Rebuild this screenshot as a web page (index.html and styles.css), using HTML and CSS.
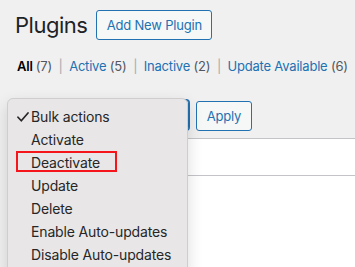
FILE: index.html
```html
<!DOCTYPE html>
<html lang="en">
<head>
    <meta charset="UTF-8">
    <meta name="viewport" content="width=device-width, initial-scale=1.0">
    <title>Plugins</title>
    <link rel="stylesheet" href="styles.css">
</head>
<body>
    <div class="wrap">
        <div class="page-header">
            <h1>Plugins</h1>
            <a href="#" class="btn">Add New Plugin</a>
        </div>

        <ul class="subsubsub">
            <li class="current">All <span class="count">(7)</span></li>
            <li class="sep">|</li>
            <li><a href="#">Active</a> <span class="count">(5)</span></li>
            <li class="sep">|</li>
            <li><a href="#">Inactive</a> <span class="count">(2)</span></li>
            <li class="sep">|</li>
            <li><a href="#">Update Available</a> <span class="count">(6)</span></li>
        </ul>

        <div class="tablenav">
            <div class="select"></div>
            <button class="btn btn-apply">Apply</button>
        </div>

        <div class="table">
            <div class="table-head"></div>
            <div class="table-body"></div>
        </div>

        <!-- open native select menu -->
        <div class="menu">
            <div class="menu-item selected">
                <span class="check">
                    <svg width="12" height="10" viewBox="0 0 12 10"><polyline points="1,5.2 4.3,8.8 11,1" fill="none" stroke="#262626" stroke-width="1.7" stroke-linecap="round" stroke-linejoin="round"/></svg>
                </span>
                Bulk actions
            </div>
            <div class="menu-item"><span class="check"></span>Activate</div>
            <div class="menu-item"><span class="check"></span>Deactivate</div>
            <div class="menu-item"><span class="check"></span>Update</div>
            <div class="menu-item"><span class="check"></span>Delete</div>
            <div class="menu-item"><span class="check"></span>Enable Auto-updates</div>
            <div class="menu-item"><span class="check"></span>Disable Auto-updates</div>
            <div class="highlight"></div>
        </div>
    </div>
</body>
</html>
```

FILE: styles.css
```css
body {
    margin: 0;
    background: #f0f0f1;
    font-family: Inter, 'Liberation Sans', sans-serif;
    color: #1d2327;
}
.wrap {
    position: relative;
    display: flex;
    flex-direction: column;
    height: 267px;
    overflow: hidden;
    padding-left: 15px;
}
.page-header {
    display: flex;
    align-items: center;
    gap: 9px;
    padding-top: 10px;
}
h1 {
    margin: 0;
    font-size: 22px;
    font-weight: 400;
    line-height: 30px;
    letter-spacing: -0.5px;
}
.btn {
    display: inline-flex;
    align-items: center;
    justify-content: center;
    box-sizing: border-box;
    height: 30px;
    padding: 0 10px;
    background: #f6f7f7;
    border: 1px solid #2271b1;
    border-radius: 3px;
    color: #2271b1;
    font-family: inherit;
    font-size: 13px;
    letter-spacing: -0.2px;
    white-space: nowrap;
    text-decoration: none;
    cursor: pointer;
}
.page-header .btn {
    width: 116px;
}
.subsubsub {
    display: flex;
    gap: 6.5px;
    list-style: none;
    margin: 16px 0 0 2px;
    padding: 0;
    font-size: 13px;
    line-height: 20px;
    letter-spacing: -0.2px;
    color: #50575e;
    white-space: nowrap;
}
.subsubsub .current {
    color: #000;
    font-weight: 600;
}
.subsubsub .current .count {
    font-weight: 400;
    color: #50575e;
}
.subsubsub a {
    color: #2271b1;
    text-decoration: none;
}
.subsubsub .sep {
    color: #a7aaad;
}
.tablenav {
    display: flex;
    gap: 7px;
    margin-top: 24px;
}
.select {
    box-sizing: border-box;
    width: 174px;
    height: 30px;
    border: 1px solid #2271b1;
    box-shadow: 0 0 0 1px #2271b1;
    border-radius: 3px;
    background: #fff;
}
.btn-apply {
    width: 56px;
    height: 30px;
    margin-top: 1px;
}
.table {
    flex: 1;
    margin-top: 7px;
    background: #fff;
    border-top: 1px solid #c3c4c7;
}
.table-head {
    height: 36px;
    border-bottom: 1px solid #c3c4c7;
}
.menu {
    position: absolute;
    left: 7px;
    top: 98px;
    width: 181px;
    height: 180px;
    box-sizing: border-box;
    padding-top: 6px;
    background: #e8e6e6;
    border: 1px solid #cfcdcd;
    border-radius: 6px;
    box-shadow: 0 6px 16px rgba(0, 0, 0, 0.14);
    font-size: 14px;
    letter-spacing: -0.15px;
    color: #262626;
}
.menu-item {
    display: flex;
    align-items: center;
    height: 23px;
    white-space: nowrap;
}
.check {
    display: flex;
    align-items: center;
    width: 23px;
    padding-left: 9px;
    box-sizing: border-box;
}
.highlight {
    position: absolute;
    left: 8px;
    top: 52px;
    width: 101px;
    height: 21px;
    box-sizing: border-box;
    border: 2px solid #f5161c;
}
```
